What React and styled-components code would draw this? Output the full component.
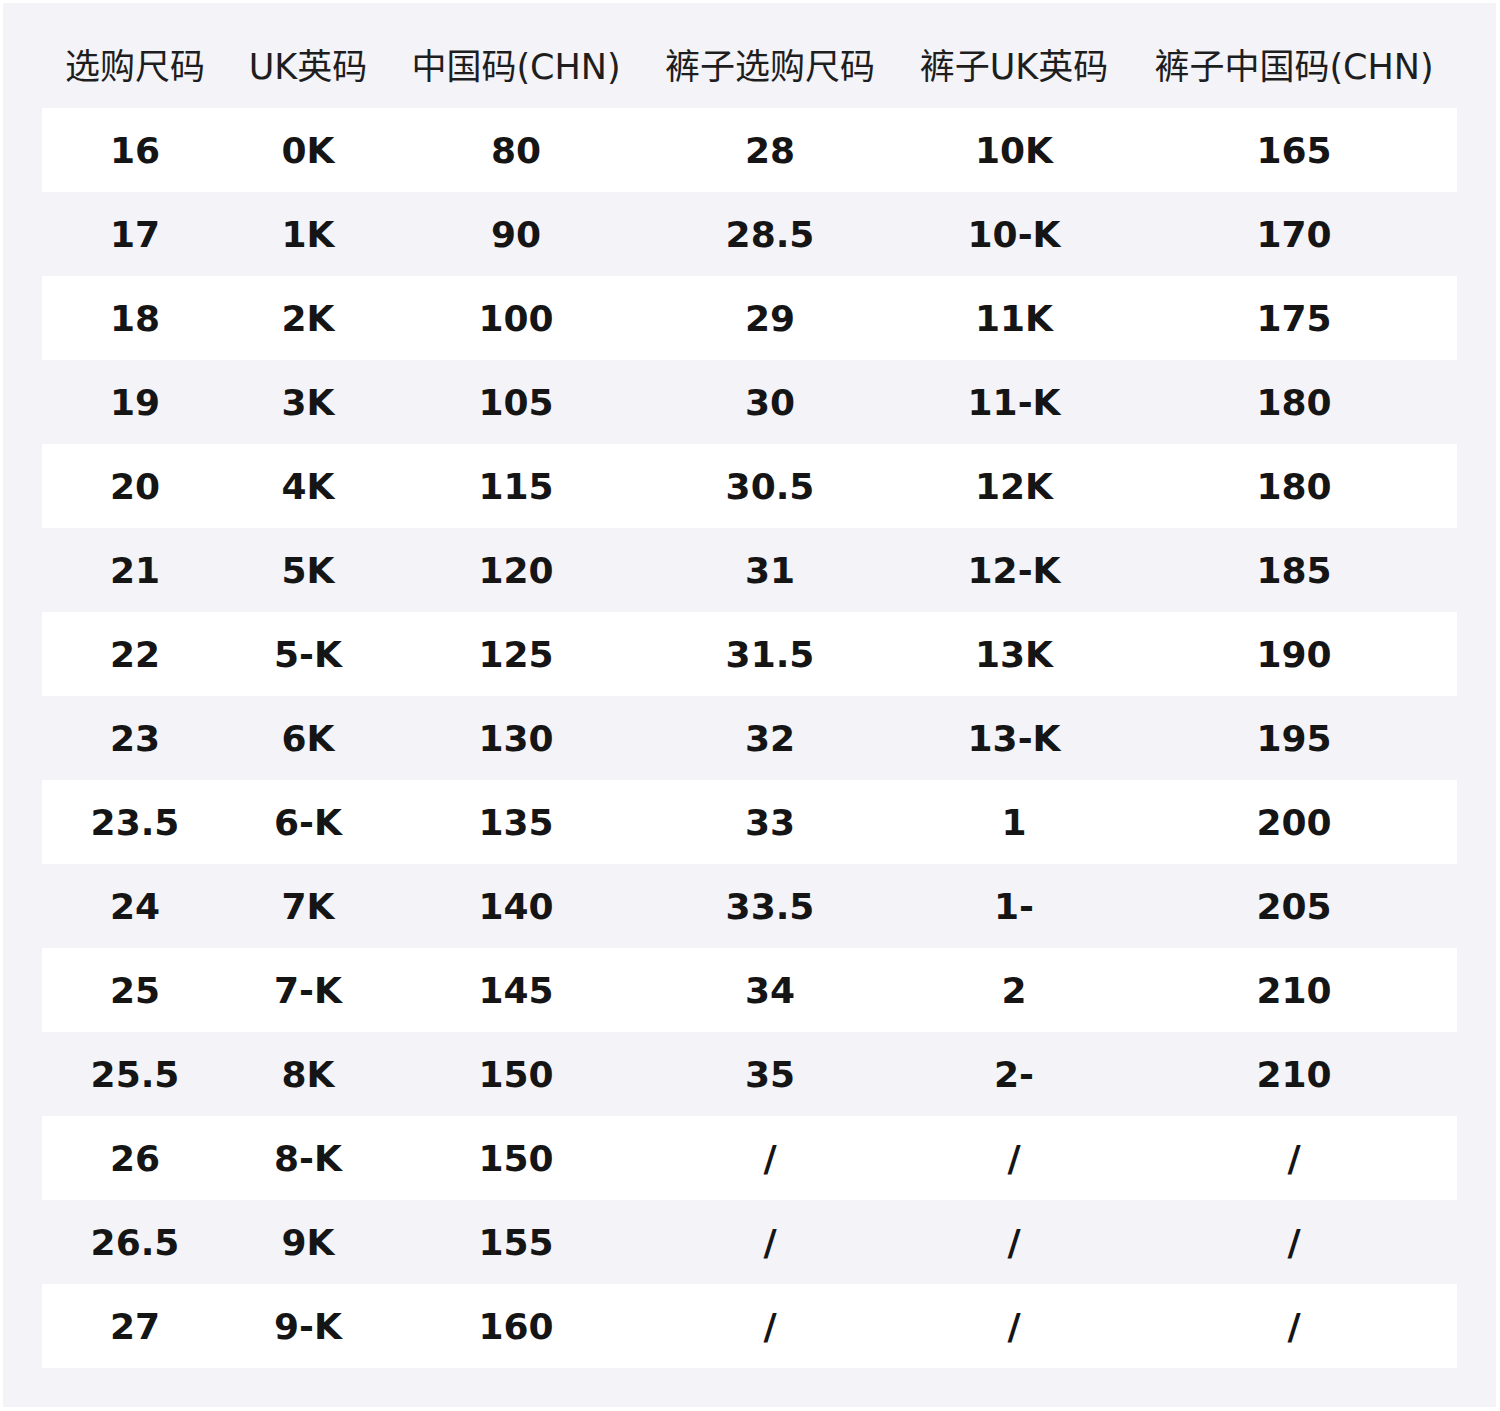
import React from "react";
import styled, { createGlobalStyle } from "styled-components";

const Global = createGlobalStyle`
  html, body { margin: 0; padding: 0; background: #ffffff; }
  body { font-family: "DejaVu Sans", "Noto Sans CJK SC", sans-serif; }
`;

const Page = styled.div`
  width: 1500px;
  height: 1411px;
  padding: 3px 4px 4px 3px;
  box-sizing: border-box;
`;

const Panel = styled.div`
  height: 100%;
  background: #f3f3f8;
  padding: 0 39px 0 39px;
  box-sizing: border-box;
`;

const cols = "186px 160px 256px 252px 236px 324px";

const HeaderRow = styled.div`
  display: grid;
  grid-template-columns: ${cols};
  height: 105px;
  align-items: center;
  padding-top: 16px;
  box-sizing: border-box;
`;

const HeadCell = styled.div`
  text-align: center;
  font-family: "DejaVu Sans", "Noto Sans CJK SC", sans-serif;
  font-size: 35px;
  font-weight: 400;
  color: #1e1e1e;
  white-space: nowrap;
`;

const Row = styled.div`
  display: grid;
  grid-template-columns: ${cols};
  height: 84px;
  align-items: center;
  background: ${(p) => (p.$striped ? "#ffffff" : "transparent")};
`;

const Cell = styled.div`
  text-align: center;
  font-family: "DejaVu Sans", sans-serif;
  font-weight: 700;
  font-size: 36px;
  color: #151515;
  white-space: nowrap;
`;

const headers = ["选购尺码", "UK英码", "中国码(CHN)", "裤子选购尺码", "裤子UK英码", "裤子中国码(CHN)"];

const rows = [
  ["16", "0K", "80", "28", "10K", "165"],
  ["17", "1K", "90", "28.5", "10-K", "170"],
  ["18", "2K", "100", "29", "11K", "175"],
  ["19", "3K", "105", "30", "11-K", "180"],
  ["20", "4K", "115", "30.5", "12K", "180"],
  ["21", "5K", "120", "31", "12-K", "185"],
  ["22", "5-K", "125", "31.5", "13K", "190"],
  ["23", "6K", "130", "32", "13-K", "195"],
  ["23.5", "6-K", "135", "33", "1", "200"],
  ["24", "7K", "140", "33.5", "1-", "205"],
  ["25", "7-K", "145", "34", "2", "210"],
  ["25.5", "8K", "150", "35", "2-", "210"],
  ["26", "8-K", "150", "/", "/", "/"],
  ["26.5", "9K", "155", "/", "/", "/"],
  ["27", "9-K", "160", "/", "/", "/"],
];

export default function App() {
  return (
    <>
      <Global />
      <Page>
        <Panel>
          <HeaderRow>
            {headers.map((h) => (
              <HeadCell key={h}>{h}</HeadCell>
            ))}
          </HeaderRow>
          {rows.map((r, i) => (
            <Row key={i} $striped={i % 2 === 0}>
              {r.map((c, j) => (
                <Cell key={j}>{c}</Cell>
              ))}
            </Row>
          ))}
        </Panel>
      </Page>
    </>
  );
}
